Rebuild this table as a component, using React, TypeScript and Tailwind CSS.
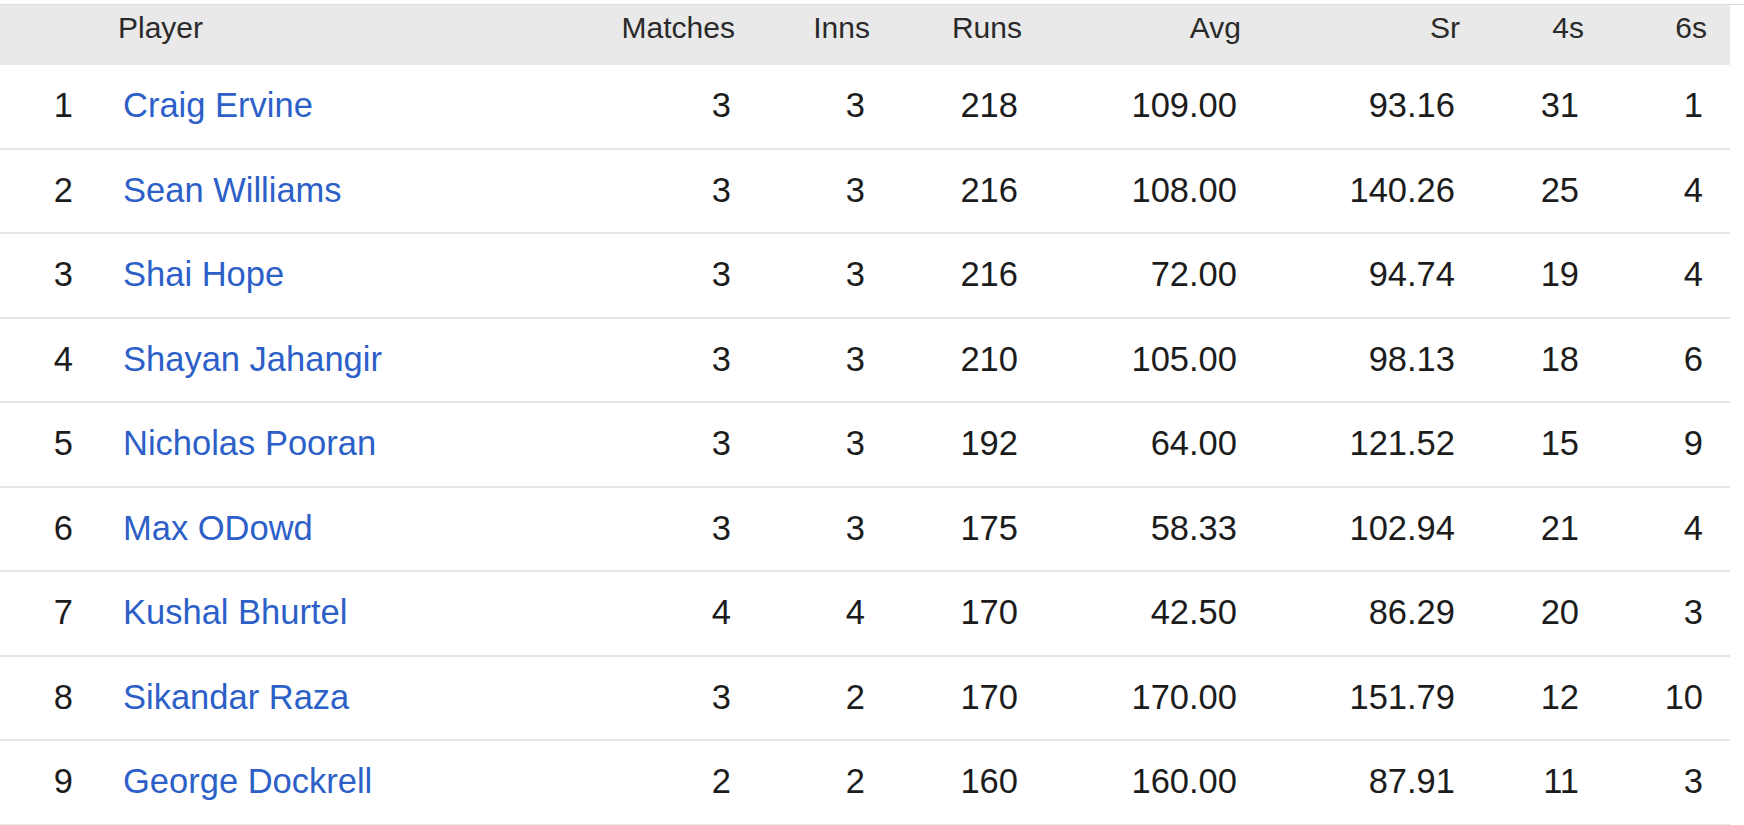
const rows = [
  { rank: 1, name: 'Craig Ervine', m: 3, i: 3, r: 218, avg: '109.00', sr: '93.16', f: 31, s: 1 },
  { rank: 2, name: 'Sean Williams', m: 3, i: 3, r: 216, avg: '108.00', sr: '140.26', f: 25, s: 4 },
  { rank: 3, name: 'Shai Hope', m: 3, i: 3, r: 216, avg: '72.00', sr: '94.74', f: 19, s: 4 },
  { rank: 4, name: 'Shayan Jahangir', m: 3, i: 3, r: 210, avg: '105.00', sr: '98.13', f: 18, s: 6 },
  { rank: 5, name: 'Nicholas Pooran', m: 3, i: 3, r: 192, avg: '64.00', sr: '121.52', f: 15, s: 9 },
  { rank: 6, name: 'Max ODowd', m: 3, i: 3, r: 175, avg: '58.33', sr: '102.94', f: 21, s: 4 },
  { rank: 7, name: 'Kushal Bhurtel', m: 4, i: 4, r: 170, avg: '42.50', sr: '86.29', f: 20, s: 3 },
  { rank: 8, name: 'Sikandar Raza', m: 3, i: 2, r: 170, avg: '170.00', sr: '151.79', f: 12, s: 10 },
  { rank: 9, name: 'George Dockrell', m: 2, i: 2, r: 160, avg: '160.00', sr: '87.91', f: 11, s: 3 },
];

// column widths measured off the screenshot
const cols = 'grid grid-cols-[118px_492px_125px_135px_152px_219px_219px_124px_123px_23px]';

export default function App() {
  return (
    <div
      className="w-[1744px] h-[825px] overflow-hidden bg-white pt-[4px]"
      style={{ fontFamily: '"Liberation Sans", Arial, sans-serif' }}
    >
      <div className="border-t border-[#dcdcdc] w-full">
        <div className="w-[1730px]">
          <div className={`${cols} h-[60px] bg-[#e9e9e9] pt-[8px] text-[30px] leading-[30px] text-[#2a2a2a]`}>
            <div />
            <div>Player</div>
            <div className="text-right">Matches</div>
            <div className="text-right">Inns</div>
            <div className="text-right">Runs</div>
            <div className="text-right">Avg</div>
            <div className="text-right">Sr</div>
            <div className="text-right">4s</div>
            <div className="text-right">6s</div>
            <div />
          </div>
          {rows.map((row) => (
            <div
              key={row.rank}
              className={`${cols} h-[84.5px] items-center border-b-2 border-[#e6e6e6] pb-[2px] text-[34.5px] leading-[34.5px] text-[#1c1c1c]`}
            >
              <div className="text-right pr-[45px]">{row.rank}</div>
              <div className="pl-[5px]">
                <a href="#" className="text-[#2d5fc8]">
                  {row.name}
                </a>
              </div>
              <div className="text-right pr-[4px]">{row.m}</div>
              <div className="text-right pr-[5px]">{row.i}</div>
              <div className="text-right pr-[4px]">{row.r}</div>
              <div className="text-right pr-[4px]">{row.avg}</div>
              <div className="text-right pr-[5px]">{row.sr}</div>
              <div className="text-right pr-[5px]">{row.f}</div>
              <div className="text-right pr-[4px]">{row.s}</div>
              <div />
            </div>
          ))}
        </div>
      </div>
    </div>
  );
}
